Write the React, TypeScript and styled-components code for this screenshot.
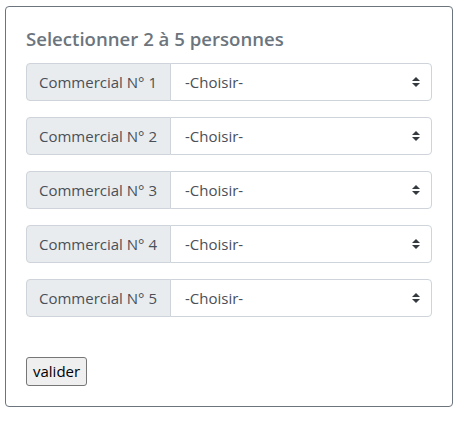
import React from "react";
import styled, { createGlobalStyle } from "styled-components";

const GlobalStyle = createGlobalStyle`
  html, body { margin: 0; padding: 0; background: #fff; }
  body {
    font-family: "Open Sans", "Noto Sans", "Liberation Sans", sans-serif;
    font-size: 15px;
    line-height: 1.5;
    color: #212529;
  }
  * { box-sizing: border-box; }
`;

const Page = styled.div`
  padding: 6px 7px 0 5px;
`;

const Card = styled.form`
  width: 448px;
  height: 401px;
  border: 1px solid #6c757d;
  border-radius: 4px;
  padding: 20px;
  display: flex;
  flex-direction: column;
`;

const Title = styled.h5`
  margin: 0 0 12px;
  font-size: 18.6px;
  line-height: 24px;
  font-weight: 600;
  color: #6c757d;
`;

const Group = styled.div`
  display: flex;
  height: 38px;
  margin-bottom: 16px;
`;

const Addon = styled.label`
  display: flex;
  align-items: center;
  width: 145px;
  flex: none;
  padding: 0 12px;
  background: #e9ecef;
  border: 1px solid #ced4da;
  border-radius: 4px 0 0 4px;
  color: #495057;
  font-size: 15px;
  white-space: nowrap;
`;

const SelectWrap = styled.div`
  position: relative;
  flex: 1;
  display: flex;
`;

const Select = styled.select`
  appearance: none;
  -webkit-appearance: none;
  flex: 1;
  height: 38px;
  margin-left: -1px;
  padding: 0 28px 0 14px;
  border: 1px solid #ced4da;
  border-radius: 0 4px 4px 0;
  background: #fff;
  color: #495057;
  font-family: inherit;
  font-size: 15px;
  outline: none;
`;

const Arrow = styled.svg`
  position: absolute;
  right: 12px;
  top: 14px;
  width: 8px;
  height: 10px;
  pointer-events: none;
`;

const Button = styled.button`
  align-self: flex-start;
  margin-top: 24px;
  height: 29px;
  padding: 0 6px;
  background: #efefef;
  border: 1px solid #767676;
  border-radius: 3px;
  color: #000;
  font-family: inherit;
  font-size: 15px;
  line-height: 1;
`;

const rows = [1, 2, 3, 4, 5];

export default function App() {
  return (
    <Page>
      <GlobalStyle />
      <Card onSubmit={(e) => e.preventDefault()}>
        <Title>Selectionner 2 à 5 personnes</Title>
        {rows.map((n) => (
          <Group key={n}>
            <Addon htmlFor={`c${n}`}>Commercial N° {n}</Addon>
            <SelectWrap>
              <Select id={`c${n}`} defaultValue="">
                <option value="">-Choisir-</option>
              </Select>
              <Arrow viewBox="0 0 4 5">
                <path fill="#343a40" d="M2 0L0 2h4zm0 5L0 3h4z" />
              </Arrow>
            </SelectWrap>
          </Group>
        ))}
        <Button type="submit">valider</Button>
      </Card>
    </Page>
  );
}
